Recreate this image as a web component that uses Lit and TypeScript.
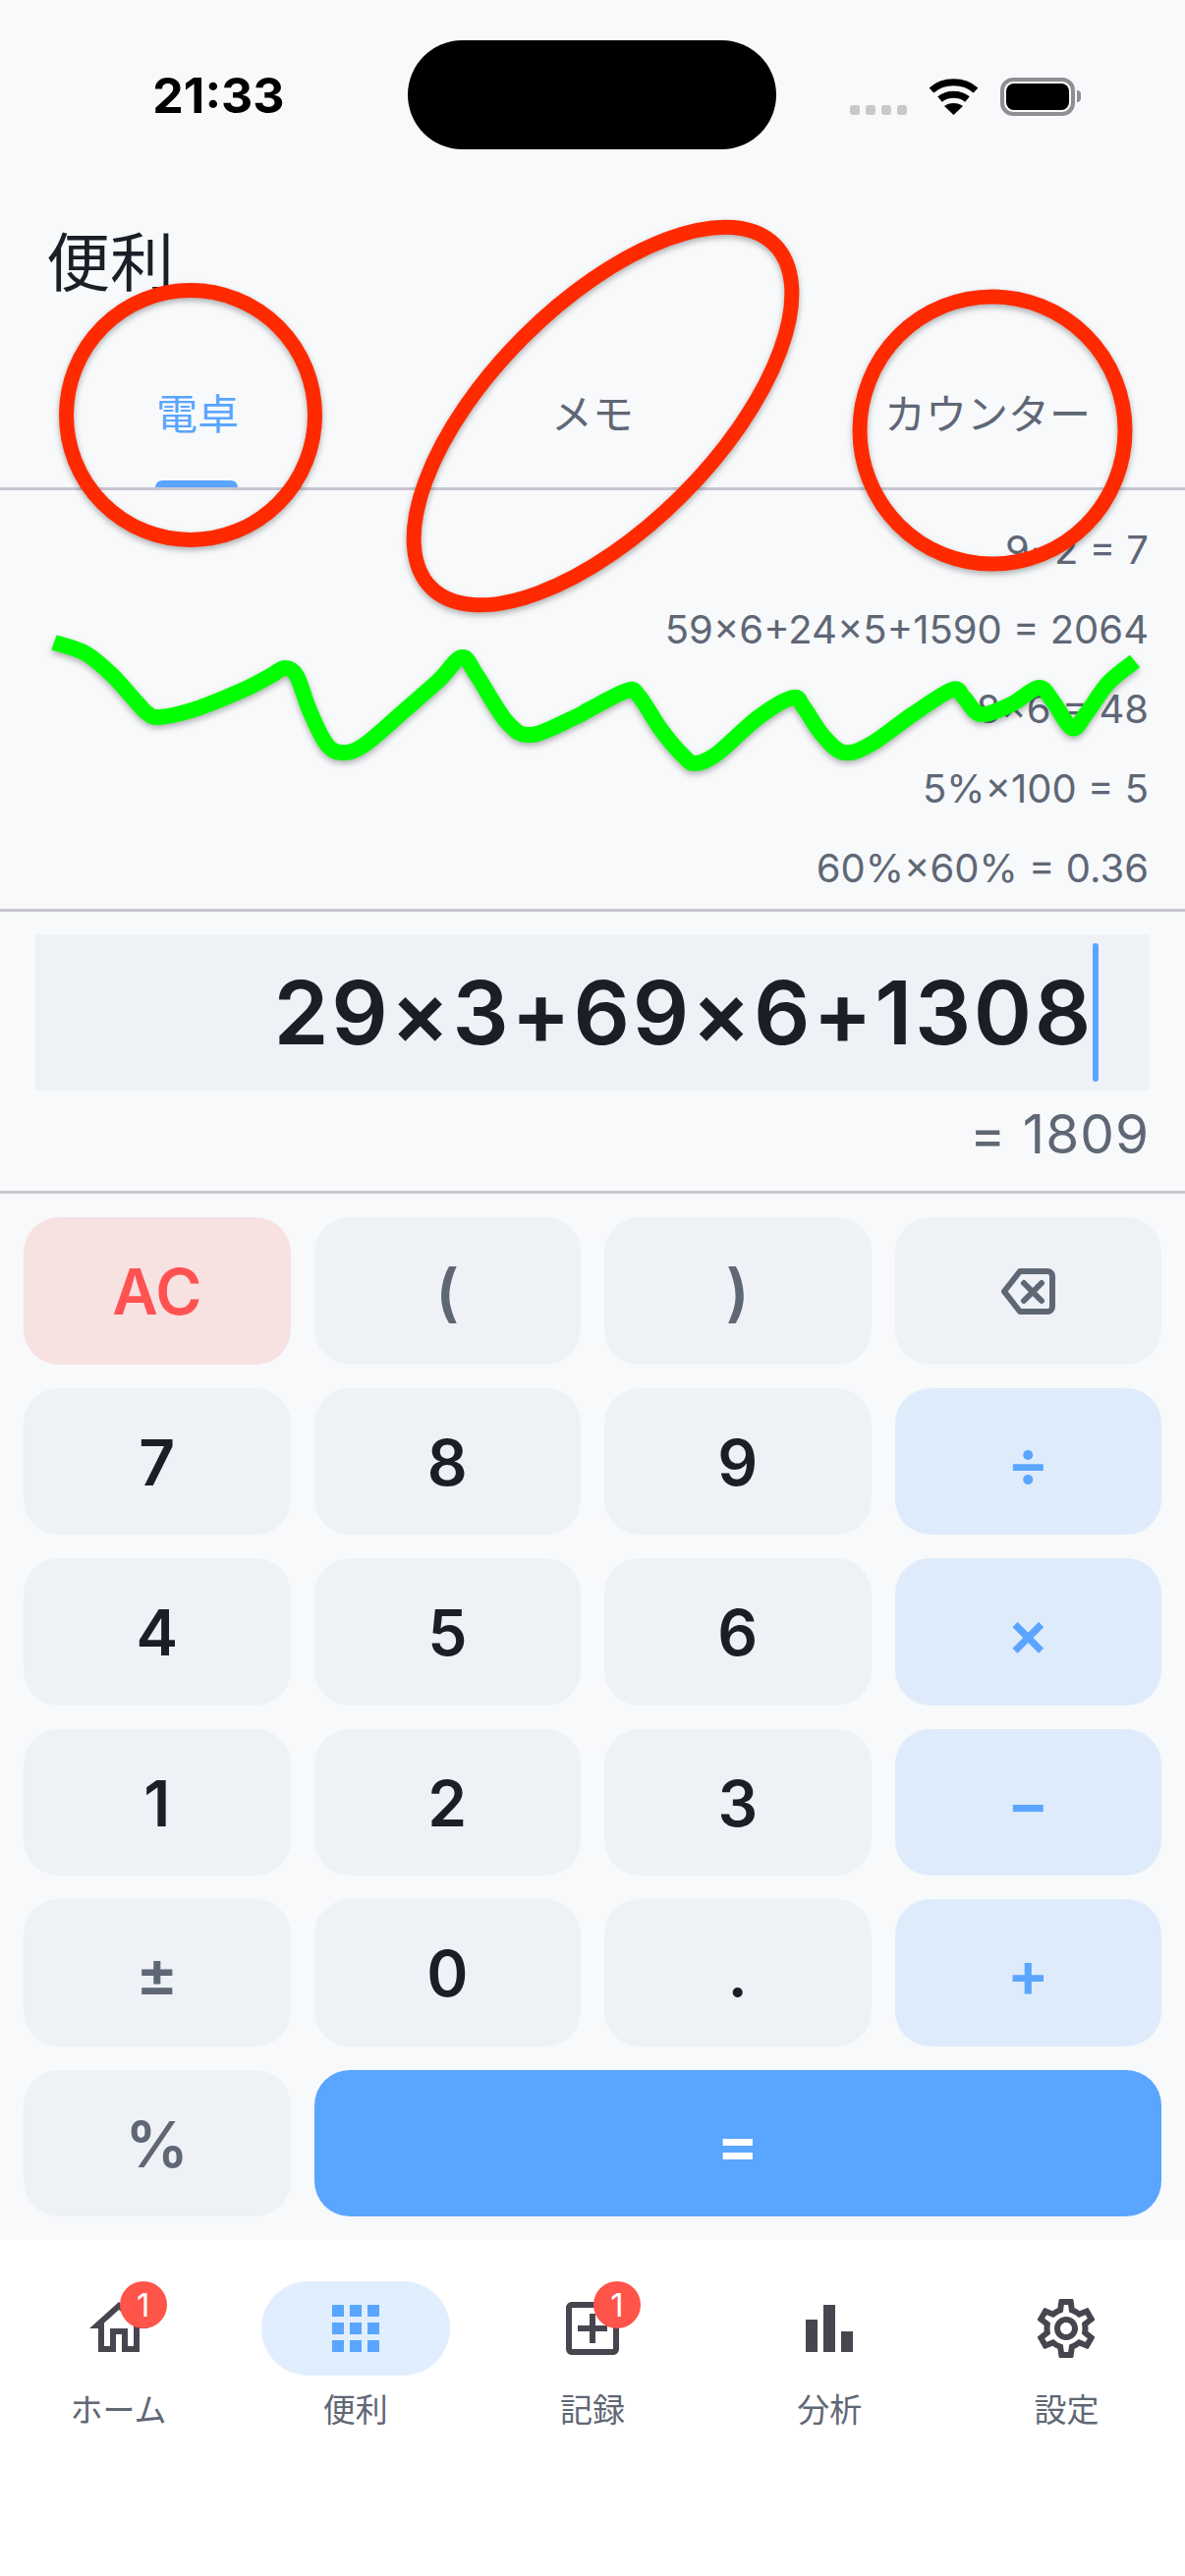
import { LitElement, css, html, svg } from 'lit'
import { customElement } from 'lit/decorators.js'

type Key = { label: string; kind: string }

const KEYS: Key[] = [
  { label: 'AC', kind: 'ac' },
  { label: '(', kind: 'fn' },
  { label: ')', kind: 'fn' },
  { label: 'back', kind: 'fn' },
  { label: '7', kind: 'num' },
  { label: '8', kind: 'num' },
  { label: '9', kind: 'num' },
  { label: '÷', kind: 'op' },
  { label: '4', kind: 'num' },
  { label: '5', kind: 'num' },
  { label: '6', kind: 'num' },
  { label: '×', kind: 'op' },
  { label: '1', kind: 'num' },
  { label: '2', kind: 'num' },
  { label: '3', kind: 'num' },
  { label: '−', kind: 'op' },
  { label: '±', kind: 'fn' },
  { label: '0', kind: 'num' },
  { label: '.', kind: 'num' },
  { label: '+', kind: 'op' },
  { label: '%', kind: 'fn' },
  { label: '=', kind: 'eq' },
]

const HISTORY = ['9−2 = 7', '59×6+24×5+1590 = 2064', '8×6 = 48', '5%×100 = 5', '60%×60% = 0.36']

const ICONS: Record<string, string> = {
  home: 'M12 5.69l5 4.5V18h-2v-6H9v6H7v-7.81l5-4.5M12 3L2 12h3v8h6v-6h2v6h6v-8h3L12 3z',
  apps: 'M4 8h4V4H4v4zm6 12h4v-4h-4v4zm-6 0h4v-4H4v4zm0-6h4v-4H4v4zm6 0h4v-4h-4v4zm6-10v4h4V4h-4zm-6 4h4V4h-4v4zm6 6h4v-4h-4v4zm0 6h4v-4h-4v4z',
  add: 'M19 3H5c-1.11 0-2 .9-2 2v14c0 1.1.89 2 2 2h14c1.1 0 2-.9 2-2V5c0-1.1-.9-2-2-2zm0 16H5V5h14v14zm-8-2h2v-4h4v-2h-4V7h-2v4H7v2h4z',
  chart: 'M4 9h4v11H4zm12 4h4v7h-4zm-6-9h4v16h-4z',
  gear: 'M19.43 12.98c.04-.32.07-.64.07-.98 0-.34-.03-.66-.07-.98l2.11-1.65c.19-.15.24-.42.12-.64l-2-3.46c-.09-.16-.26-.25-.44-.25-.06 0-.12.01-.17.03l-2.49 1c-.52-.4-1.08-.73-1.69-.98l-.38-2.65C14.46 2.18 14.25 2 14 2h-4c-.25 0-.46.18-.49.42l-.38 2.65c-.61.25-1.17.59-1.69.98l-2.49-1c-.06-.02-.12-.03-.18-.03-.17 0-.34.09-.43.25l-2 3.46c-.13.22-.07.49.12.64l2.11 1.65c-.04.32-.07.65-.07.98 0 .33.03.66.07.98l-2.11 1.65c-.19.15-.24.42-.12.64l2 3.46c.09.16.26.25.44.25.06 0 .12-.01.17-.03l2.49-1c.52.4 1.08.73 1.69.98l.38 2.65c.03.24.24.42.49.42h4c.25 0 .46-.18.49-.42l.38-2.65c.61-.25 1.17-.59 1.69-.98l2.49 1c.06.02.12.03.18.03.17 0 .34-.09.43-.25l2-3.46c.12-.22.07-.49-.12-.64l-2.11-1.65zm-1.98-1.71c.04.31.05.52.05.73 0 .21-.02.43-.05.73l-.14 1.13.89.7 1.08.84-.7 1.21-1.27-.51-1.04-.42-.9.68c-.43.32-.84.56-1.25.73l-1.06.43-.16 1.13-.2 1.35h-1.4l-.19-1.35-.16-1.13-1.06-.43c-.43-.18-.83-.41-1.23-.71l-.91-.7-1.06.43-1.27.51-.7-1.21 1.08-.84.89-.7-.14-1.13c-.03-.31-.05-.54-.05-.74s.02-.43.05-.73l.14-1.13-.89-.7-1.08-.84.7-1.21 1.27.51 1.04.42.9-.68c.43-.32.84-.56 1.25-.73l1.06-.43.16-1.13.2-1.35h1.39l.19 1.35.16 1.13 1.06.43c.43.18.83.41 1.23.71l.91.7 1.06-.43 1.27-.51.7 1.21-1.07.85-.89.7.14 1.13zM12 8c-2.21 0-4 1.79-4 4s1.79 4 4 4 4-1.79 4-4-1.79-4-4-4zm0 6c-1.1 0-2-.9-2-2s.9-2 2-2 2 .9 2 2-.9 2-2 2z',
}

const NAV = [
  { label: 'ホーム', icon: 'home', badge: '1' },
  { label: '便利', icon: 'apps', active: true },
  { label: '記録', icon: 'add', badge: '1' },
  { label: '分析', icon: 'chart' },
  { label: '設定', icon: 'gear' },
]

// the hand drawn scribble on top of the history list
const SCRIBBLE: number[][] = [
  [55, 654], [87, 665], [114, 687], [141, 717], [150, 726], [162, 730], [198, 722], [248, 702], [275, 688],
  [290, 680], [302, 688], [315, 723], [332, 757], [348, 766], [371, 758], [413, 722], [447, 692],
  [470, 669], [485, 687], [516, 735], [541, 748], [585, 730], [600, 722], [638, 703], [650, 708],
  [673, 743], [696, 770], [708, 777], [730, 767], [772, 730], [807, 710], [818, 720], [837, 748],
  [859, 766], [887, 757], [929, 727], [969, 702], [981, 710], [998, 727], [1029, 717], [1057, 700],
  [1071, 713], [1091, 741], [1105, 727], [1128, 695], [1155, 673],
]

function smoothPath(pts: number[][]) {
  let d = `M${pts[0][0]} ${pts[0][1]}`
  for (let i = 0; i < pts.length - 1; i++) {
    const p0 = pts[Math.max(i - 1, 0)]
    const p1 = pts[i]
    const p2 = pts[i + 1]
    const p3 = pts[Math.min(i + 2, pts.length - 1)]
    const c1x = p1[0] + (p2[0] - p0[0]) / 6
    const c1y = p1[1] + (p2[1] - p0[1]) / 6
    const c2x = p2[0] - (p3[0] - p1[0]) / 6
    const c2y = p2[1] - (p3[1] - p1[1]) / 6
    d += `C${c1x} ${c1y} ${c2x} ${c2y} ${p2[0]} ${p2[1]}`
  }
  return d
}

@customElement('app-root')
export class AppRoot extends LitElement {
  private renderKey(key: Key) {
    const content =
      key.label === 'back'
        ? html`<svg class="back" viewBox="0 0 55 47" fill="none" stroke="currentColor" stroke-width="6" stroke-linecap="round" stroke-linejoin="round">
            <path d="M19 3H47a5 5 0 0 1 5 5V39a5 5 0 0 1-5 5H19L3 23.500Z" />
            <path d="M23 15L41 33M41 15L23 33" />
          </svg>`
        : key.label
    return html`<button class="key ${key.kind}">${content}</button>`
  }

  private renderNav(item: (typeof NAV)[number]) {
    return html`
      <div class="nav-item">
        <div class="pill ${item.active ? 'active' : ''}">
          <svg class="nav-icon" viewBox="0 0 24 24"><path d=${ICONS[item.icon]} /></svg>
          ${item.badge ? html`<span class="badge">${item.badge}</span>` : ''}
        </div>
        <span class="nav-label">${item.label}</span>
      </div>
    `
  }

  render() {
    return html`
      <div class="page">
        <div class="status">
          <div class="time">21:33</div>
          <div class="island"></div>
          <div class="indicators">
            <div class="dots"><i></i><i></i><i></i><i></i></div>
            <svg class="wifi" viewBox="0 0 51 37">
              <path d="M3 12C15 1 36 1 48 12" fill="none" stroke="#000" stroke-width="7" />
              <path d="M11.5 21C19 14.500 32 14.500 39.500 21" fill="none" stroke="#000" stroke-width="7" />
              <path d="M25.500 37L16 28C21 24 30 24 35 28Z" />
            </svg>
            <div class="battery"><div class="cell"></div></div>
            <div class="nub"></div>
          </div>
        </div>

        <h1 class="title">便利</h1>

        <div class="tabs">
          <div class="tab active"><span class="tab-label">電卓</span><span class="indicator"></span></div>
          <div class="tab"><span class="tab-label">メモ</span></div>
          <div class="tab"><span class="tab-label">カウンター</span></div>
        </div>

        <div class="history">
          ${HISTORY.map((line) => html`<div class="history-line">${line}</div>`)}
        </div>

        <div class="display">
          <div class="input">
            <span class="expr">29×3+69×6+1308</span>
            <span class="caret"></span>
          </div>
          <div class="result">= 1809</div>
        </div>

        <div class="keypad">${KEYS.map((k) => this.renderKey(k))}</div>

        <nav class="nav">${NAV.map((n) => this.renderNav(n))}</nav>
      </div>

      <svg class="marks" viewBox="0 0 1206 2622" fill="none">
        ${svg`
          <ellipse cx="194" cy="422.500" rx="126.500" ry="127" stroke="#ff2a00" stroke-width="15" />
          <ellipse cx="613.500" cy="423.500" rx="247" ry="114" transform="rotate(-45 613.500 423.500)" stroke="#ff2a00" stroke-width="15" />
          <ellipse cx="1010" cy="438" rx="135" ry="136" stroke="#ff2a00" stroke-width="15" />
          <path d=${smoothPath(SCRIBBLE)} stroke="#00ff00" stroke-width="16" stroke-linejoin="round" />
        `}
      </svg>
    `
  }

  static styles = css`
    :host {
      display: block;
      position: relative;
      width: 1206px;
      height: 2622px;
      overflow: hidden;
      font-family: Inter, 'Noto Sans CJK JP', sans-serif;
    }

    .page {
      display: flex;
      flex-direction: column;
      height: 100%;
      background: #f7f9fb;
    }

    .status {
      display: flex;
      height: 230px;
      padding-top: 41px;
      box-sizing: border-box;
      flex: none;
    }

    .time {
      width: 415px;
      height: 111px;
      padding-left: 30px;
      box-sizing: border-box;
      display: flex;
      align-items: center;
      justify-content: center;
      font-size: 50px;
      font-weight: 700;
      color: #000;
    }

    .island {
      width: 375px;
      height: 111px;
      border-radius: 56px;
      background: #000;
    }

    .indicators {
      display: flex;
      align-items: flex-end;
      height: 76px;
      padding-left: 75px;
    }

    .dots {
      display: flex;
      gap: 6px;
      margin-right: 22px;
    }

    .dots i {
      display: block;
      width: 10px;
      height: 10px;
      border-radius: 3px;
      background: #c8c8c8;
    }

    .wifi {
      width: 51px;
      height: 37px;
      margin-right: 22px;
    }

    .battery {
      width: 76px;
      height: 39px;
      box-sizing: border-box;
      border: 4px solid #8e8e93;
      border-radius: 13px;
      padding: 2px;
      margin-bottom: -1px;
    }

    .cell {
      height: 100%;
      border-radius: 8px;
      background: #000;
    }

    .nub {
      width: 4px;
      height: 12px;
      margin: 0 0 13px 2px;
      border-radius: 0 4px 4px 0;
      background: #8e8e93;
    }

    .title {
      margin: 0;
      height: 116px;
      flex: none;
      padding-left: 47px;
      font-size: 65px;
      font-weight: 400;
      line-height: 76px;
      color: #1a1f27;
    }

    .tabs {
      display: grid;
      grid-template-columns: repeat(3, 1fr);
      height: 153px;
      flex: none;
      border-bottom: 3px solid #c8c5cf;
      box-sizing: border-box;
    }

    .tab {
      position: relative;
      display: flex;
      align-items: center;
      justify-content: center;
      padding-bottom: 5px;
      font-size: 42px;
      color: #5f6775;
    }

    .tab.active {
      color: #5aa5ff;
    }

    .indicator {
      position: absolute;
      left: 50%;
      bottom: 0;
      width: 84px;
      height: 7px;
      margin-left: -43px;
      border-radius: 8px 8px 0 0;
      background: #5aa5ff;
    }

    .history {
      display: flex;
      flex-direction: column;
      justify-content: flex-end;
      height: 429px;
      flex: none;
      box-sizing: border-box;
      padding: 0 37px 1px 0;
      border-bottom: 3px solid #c8c5cf;
    }

    .history-line {
      height: 81px;
      line-height: 81px;
      text-align: right;
      font-size: 40px;
      color: #5f6775;
    }

    .display {
      height: 287px;
      flex: none;
      box-sizing: border-box;
      padding: 23px 36px 0;
      border-bottom: 3px solid #c8c5cf;
    }

    .input {
      display: flex;
      align-items: center;
      justify-content: flex-end;
      height: 159px;
      padding-right: 57px;
      box-sizing: border-box;
      position: relative;
      background: #eef1f6;
    }

    .expr {
      font-size: 90px;
      font-weight: 600;
      color: #1a1f27;
      letter-spacing: 2.6px;
    }

    .caret {
      position: absolute;
      right: 52px;
      top: 9px;
      width: 6px;
      height: 141px;
      border-radius: 3px;
      background: #5aa5ff;
    }

    .result {
      margin-top: 13px;
      text-align: right;
      font-size: 55px;
      line-height: 62px;
      letter-spacing: 1px;
      color: #5f6775;
    }

    .keypad {
      display: grid;
      grid-template-columns: repeat(4, 1fr);
      grid-template-rows: repeat(6, 1fr);
      gap: 24px;
      height: 1065px;
      flex: none;
      box-sizing: border-box;
      padding: 24px;
    }

    .key {
      display: flex;
      align-items: center;
      justify-content: center;
      border: none;
      padding: 2px 0 0;
      border-radius: 36px;
      font-family: inherit;
      font-size: 64px;
      font-weight: 600;
      background: #eef1f6;
      color: #1a1f27;
    }

    .key.fn {
      color: #5f6775;
    }

    .key.op {
      background: #deebfa;
      color: #5aa5ff;
    }

    .key.ac {
      background: #f8e1e1;
      color: #ff5252;
    }

    .key.eq {
      grid-column: span 3;
      background: #5aa5ff;
      color: #fff;
    }

    .back {
      width: 55px;
      height: 47px;
    }

    .nav {
      flex: 1;
      display: grid;
      grid-template-columns: repeat(5, 1fr);
      background: #fff;
      padding-top: 42px;
    }

    .nav-item {
      display: flex;
      flex-direction: column;
      align-items: center;
    }

    .pill {
      position: relative;
      display: flex;
      align-items: center;
      justify-content: center;
      width: 192px;
      height: 96px;
      border-radius: 48px;
    }

    .pill.active {
      background: #e0eefe;
    }

    .nav-icon {
      width: 72px;
      height: 72px;
      fill: #49454f;
    }

    .pill.active .nav-icon {
      fill: #5aa5ff;
    }

    .badge {
      position: absolute;
      left: 97px;
      top: 0;
      width: 48px;
      height: 48px;
      border-radius: 50%;
      display: flex;
      align-items: center;
      justify-content: center;
      background: #ff5449;
      color: #fff;
      font-size: 33px;
    }

    .nav-label {
      margin-top: 15px;
      font-size: 33px;
      line-height: 40px;
      color: #5f6775;
    }

    .marks {
      position: absolute;
      inset: 0;
      width: 1206px;
      height: 2622px;
      pointer-events: none;
      filter: drop-shadow(0 3px 3px rgba(0, 0, 0, 0.3));
    }
  `
}

declare global {
  interface HTMLElementTagNameMap {
    'app-root': AppRoot
  }
}
